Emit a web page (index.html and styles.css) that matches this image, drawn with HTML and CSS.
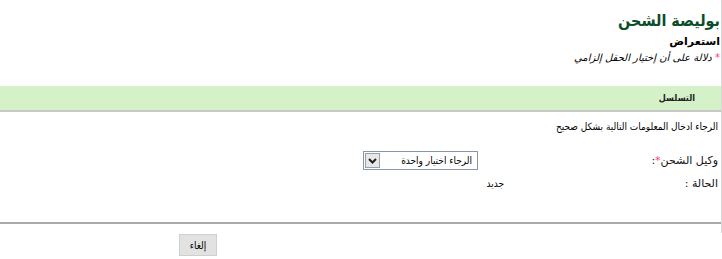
FILE: index.html
```html
<!DOCTYPE html>
<html lang="ar" dir="rtl">
<head>
<meta charset="utf-8">
<link rel="stylesheet" href="styles.css">
</head>
<body>
<div class="page">
  <div class="main">
    <div class="header">
      <h1 class="title">بوليصة الشحن</h1>
      <div class="subtitle">استعراض</div>
      <div class="note"><span class="req">*</span> دلالة على أن إختيار الحقل إلزامي</div>
    </div>
    <div class="section-bar"><span class="section-title">التسلسل</span></div>
    <div class="content">
      <div class="intro">الرجاء ادخال المعلومات التالية بشكل صحيح</div>
      <div class="form-row row-agent">
        <div class="label">وكيل الشحن<span class="req">*</span>:</div>
        <div class="field">
          <div class="select">
            <span class="select-text">الرجاء اختيار واحدة</span>
            <span class="select-btn"><svg width="9" height="6" viewBox="0 0 9 6"><path d="M1 1 L4.5 4.5 L8 1" fill="none" stroke="#222" stroke-width="2"/></svg></span>
          </div>
        </div>
      </div>
      <div class="form-row row-status">
        <div class="label">الحالة :</div>
        <div class="field value">جديد</div>
      </div>
    </div>
  </div>
  <div class="actions">
    <button class="btn">إلغاء</button>
  </div>
</div>
</body>
</html>
```
FILE: styles.css
```css
html, body {
  margin: 0;
  padding: 0;
  background: #fff;
}
body {
  font-family: "DejaVu Sans Condensed", "DejaVu Sans", sans-serif;
  font-size: 10px;
  color: #000;
}
.page {
  width: 722px;
  height: 259px;
  direction: rtl;
  overflow: hidden;
}
.main {
  border-right: 1px solid #d8d8d8;
  padding-bottom: 9px;
}
.header {
  padding: 9px 1px 0 0;
  height: 77px;
  box-sizing: border-box;
}
.title {
  margin: 0;
  font-size: 16px;
  font-weight: bold;
  color: #0b4d28;
  line-height: 24px;
}
.subtitle {
  font-family: "DejaVu Sans", sans-serif;
  font-weight: bold;
  margin-top: 2px;
  line-height: 14px;
  font-size: 11px;
}
.note {
  font-family: "DejaVu Sans", sans-serif;
  font-style: italic;
  margin-top: 2px;
  line-height: 14px;
  font-size: 10px;
}
.req {
  color: #ff3b6b;
}
.section-bar {
  margin-top: 9px;
  height: 24px;
  background: #d5f1c8;
  border-bottom: 2px solid #c8c8c8;
  display: flex;
  align-items: center;
  padding-right: 26px;
}
.section-title {
  font-weight: bold;
  font-size: 9px;
  color: #222;
}
.content {
  height: 112px;
  border-bottom: 2px solid #aaa;
  padding: 8px 3px 0 0;
  box-sizing: border-box;
}
.intro {
  line-height: 14px;
}
.form-row {
  display: flex;
  align-items: center;
}
.row-agent {
  margin-top: 17px;
}
.row-status {
  margin-top: 7px;
}
.label {
  width: 240px;
  font-family: "DejaVu Sans", sans-serif;
  font-size: 11px;
  color: #111;
}
.field {
  flex: none;
}
.value {
  margin-right: -26px;
}
.select {
  width: 115px;
  height: 19px;
  border: 1px solid #8a96a8;
  display: flex;
  align-items: center;
  box-sizing: border-box;
  background: #fff;
}
.select-text {
  flex: 1;
  padding-right: 5px;
  font-size: 10px;
}
.select-btn {
  width: 15px;
  height: 15px;
  margin-left: 1px;
  background: #e8e8e8;
  border: 1px solid #9aa0aa;
  display: flex;
  align-items: center;
  justify-content: center;
  box-sizing: border-box;
}
.actions {
  padding: 1px 505px 0 0;
}
.btn {
  width: 38px;
  height: 22px;
  font-family: "DejaVu Sans Condensed", "DejaVu Sans", sans-serif;
  font-size: 10px;
  background: #e2e2e2;
  border: 1px solid #cfcfcf;
  padding: 0;
  color: #000;
}
```
